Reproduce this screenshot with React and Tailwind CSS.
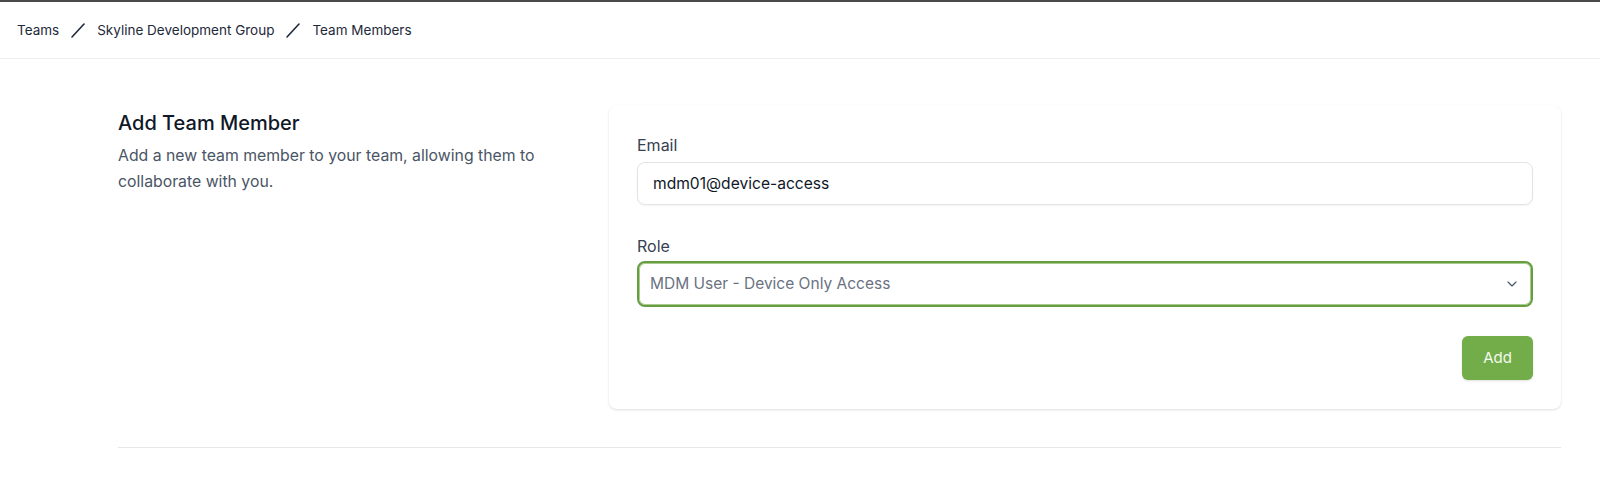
import React from 'react';
import { ChevronDown } from 'lucide-react';

const font = { fontFamily: 'Inter, "Noto Sans", sans-serif' };

function Slash() {
  return (
    <svg width="20" height="20" viewBox="0 0 20 20" className="text-gray-800">
      <path d="M4 17 L16 4" stroke="currentColor" strokeWidth="1.6" strokeLinecap="round" />
    </svg>
  );
}

export default function App() {
  return (
    <div className="min-h-screen bg-white text-gray-900" style={font}>
      {/* top bar edge */}
      <div className="h-[2px] bg-[#4a4a4a]" />

      {/* Breadcrumbs */}
      <header className="h-[57px] border-b border-[#eeeeee] flex items-center pl-[17px]">
        <nav className="flex items-center gap-[9px] text-[13.5px] text-gray-800">
          <span>Teams</span>
          <Slash />
          <span>Skyline Development Group</span>
          <Slash />
          <span>Team Members</span>
        </nav>
      </header>

      <main className="pl-[118px] pr-[39px] pt-[47px]">
        <div className="grid grid-cols-3 gap-[30px]">
          {/* Section title */}
          <div className="pt-[3px]">
            <h3 className="text-[20px] font-medium text-gray-900 leading-7">Add Team Member</h3>
            <p className="mt-[6px] text-[15.8px] leading-[25.5px] text-gray-600 pr-6">
              Add a new team member to your team, allowing them to collaborate with you.
            </p>
          </div>

          {/* Form card */}
          <div className="col-span-2 bg-white rounded-lg shadow-[0_1px_3px_rgba(0,0,0,0.10),0_1px_2px_rgba(0,0,0,0.04)] px-7 pt-[29px] pb-[29px]">
            <div className="flex flex-col">
              <label className="text-[16px] text-gray-700 leading-5">Email</label>
              <input
                readOnly
                value="mdm01@device-access"
                className="mt-[7px] h-[43px] w-full rounded-lg border border-[#e2e4e8] bg-white px-[15px] text-[15.6px] text-gray-900 shadow-[0_1px_2px_rgba(0,0,0,0.05)] outline-none"
              />
            </div>

            <div className="flex flex-col mt-[31px]">
              <label className="text-[16px] text-gray-700 leading-5">Role</label>
              <div className="mt-[5px] h-[46px] w-full rounded-lg border-2 border-[#679c42] ring-1 ring-inset ring-[#a7cc8c] bg-white px-[11px] flex items-center justify-between">
                <span className="text-[15.5px] text-gray-500">MDM User - Device Only Access</span>
                <ChevronDown size={16} strokeWidth={1.75} className="text-gray-600" />
              </div>
            </div>

            <div className="flex justify-end mt-[29px]">
              <button className="h-[44px] w-[71px] rounded-md bg-[#73ad4a] text-[15px] text-[#f3f9ee] shadow-sm">
                Add
              </button>
            </div>
          </div>
        </div>

        <div className="mt-[38px] border-t border-[#e5e7eb]" />
      </main>
    </div>
  );
}
